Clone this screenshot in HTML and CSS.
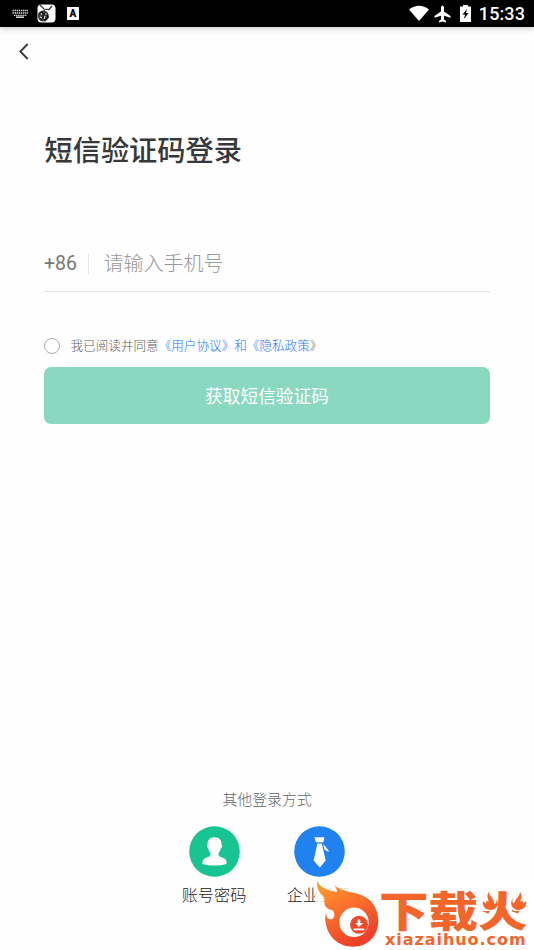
FILE: index.html
```html
<!DOCTYPE html>
<html lang="zh-CN">
<head>
<meta charset="utf-8">
<title>短信验证码登录</title>
<link rel="stylesheet" href="styles.css">
</head>
<body>
<header class="status">
  <svg class="keyboard" width="17" height="10" viewBox="0 0 17 10"><g fill="none" stroke="#ddd"><path d="M.5 1.5H16" stroke-width="1.5" stroke-dasharray="1.4 .7"/><path d="M.5 4H16M2 6.3H15" stroke-width="1.3" stroke-dasharray="1.4 .7"/><path d="M4 8.2H12" stroke-width="1.5"/></g></svg>
  <svg class="app" width="19" height="19" viewBox="0 0 19 19"><rect x=".5" y=".5" width="18" height="18" rx="4" fill="#fff"/><path d="M3 1l4 4 5 .5L15 2M7 6l1 3" stroke="#333" stroke-width="1.2" fill="none"/><circle cx="6.3" cy="12" r="5.500" fill="#444"/><path d="M2 10l3-2 1 3 3-2 2 4-3 3-2-3-3 3" fill="none" stroke="#111" stroke-width="1.5"/><path d="M4 9l1 2M8 12l-1 3M3 13l2 1M9 9v2" stroke="#eee"/></svg>
  <span class="letter">A</span>
  <div class="system">
    <svg width="20" height="17" viewBox="0 0 20 17"><path d="M0 4.5Q10-3 20 4.5L10 16Z" fill="#fff"/></svg>
    <svg class="plane" width="17" height="18" viewBox="0 0 17 18"><path d="M7 2Q8.5-1 10 2V6.5L16.5 11V12.7L10 10.8V14.5L12 16V17.5L8.5 16.5 5 17.5V16L7 14.5V10.8L.5 12.7V11L7 6.5Z" fill="#fff"/></svg>
    <svg class="battery" width="11" height="17" viewBox="0 0 11 17"><path d="M3 0H8V1.5H11V17H0V1.5H3Z" fill="#fff"/><path d="M7 4L2.5 9.5H5L4 14 8.5 8H6Z" fill="#000"/></svg>
    <time>15:33</time>
  </div>
</header>
<nav class="nav"><svg width="10" height="17" viewBox="0 0 10 17"><path d="M8.7 1L1.3 8.5 8.7 16" fill="none" stroke="#36383a" stroke-width="1.8"/></svg></nav>
<main class="login">
  <h1>短信验证码登录</h1>
  <div class="phone"><span class="code">+86</span><span class="hint">请输入手机号</span></div>
  <div class="agree"><i class="radio"></i><span>我已阅读并同意<b>《用户协议》和《隐私政策</b>》</span></div>
  <div class="submit">获取短信验证码</div>
</main>
<footer class="other">
  <p class="other-title">其他登录方式</p>
  <div class="methods">
    <div class="method">
      <svg width="51" height="51" viewBox="0 0 51 51"><circle cx="25.5" cy="25.5" r="25.3" fill="#18c491"/><path d="M25.5 11.3C20.500 11.300 18.200 14.500 18.500 19C17.500 19.500 17.800 22 19.200 22.500C19.700 25 20.700 26 21.500 27.200Q22 30 19 31L16 32.300Q13.300 33.500 13.300 38Q19 39.600 25.500 39.600T37.700 38Q37.700 33.500 35 32.300L32 31Q29 30 29.500 27.200C30.300 26 31.300 25 31.800 22.500C33.200 22 33.500 19.500 32.500 19C32.800 14.500 30.500 11.300 25.500 11.300Z" fill="#fff"/></svg>
      <span>账号密码</span>
    </div>
    <div class="method">
      <svg width="51" height="51" viewBox="0 0 51 51"><circle cx="25.500" cy="25.500" r="25.300" fill="#2082f0"/><path d="M20.500 11.300H30.500L29.300 16.200H22ZM23.400 17.500H27.800L31.700 34.500 25.800 41.500 19.600 34.500Z" fill="#fff"/><path d="M29.200 18L34.600 24.500 34.300 26 30.500 23.600Z" fill="#fff"/></svg>
      <span>企业登录</span>
    </div>
  </div>
</footer>
<div class="watermark">
  <svg class="flame" width="68" height="70" viewBox="0 0 68 70">
    <defs><linearGradient id="fire" x1="0" y1="0" x2=".5" y2="1"><stop offset="0" stop-color="#ffa02d"/><stop offset=".55" stop-color="#f96b2c"/><stop offset="1" stop-color="#ed402a"/></linearGradient></defs>
    <path d="M2.300 1C5 7 10 10 22 12C22 9 20.500 7 19 5C25 10 34 12 42 13.500C56 17 63.500 28 63.300 42C62.500 57 52 66.700 38 66.700C23 66.700 12.500 56 10.700 43Q9.500 37 11 33.300C11.500 38 13.500 39.800 16.500 39.200C20 38 20 34 18.300 31C16 29 11 30 9.500 24C8.800 19 11 19 7.500 15.500C3 11 1.500 7 2.300 1Z" fill="url(#fire)"/>
    <circle cx="39" cy="42.300" r="14.700" fill="#fff"/>
    <circle cx="44" cy="44.800" r="9" fill="#ed492b"/>
    <path d="M42.700 39.500H45.300V43H48L44 47 40 43H42.700ZM38.700 48.500H49.300V50.300H38.700Z" fill="#fff"/>
  </svg>
  <div class="brand">
    <span class="brand-name">下载火</span><span class="brand-url">xiazaihuo.com</span>
    <svg class="sparks" width="48" height="28" viewBox="0 0 48 28"><path d="M0 2H18V14L14 21H0ZM30 2H48V21H34L30 17Z" fill="#fff"/><path d="M9 2C9 7 15 9 14 14C17 13 17 11 16 8C20 14 17 19 11 20C6 20 2 17 3 11C5 13 6 14 8 13C10 10 5 7 9 2ZM40 2C40 7 34 9 35 14C32 13 32 11 33 8C29 14 32 19 38 20C43 20 47 17 46 11C44 13 43 14 41 13C39 10 44 7 40 2Z" fill="#f3662b"/><path d="M6 11L14 12 14 18H7ZM34 12L43 11 42 18H35Z" fill="#f3662b"/></svg>
  </div>
</div>
</body>
</html>
```
FILE: styles.css
```css
* { box-sizing: border-box; }
body { margin: 0; height: 950px; overflow: hidden; position: relative; display: flex; flex-direction: column; background: #fefefe; font-family: Roboto, "Noto Sans CJK SC", sans-serif; color: #36383a; }
svg { display: block; flex: none; }
.status { height: 27px; flex: none; display: flex; align-items: center; padding: 0 9px 0 12px; background: #000; box-shadow: 0 1px 6px rgba(0,0,0,.25); }
.app { margin-left: 8px; }
.letter { width: 12px; height: 13px; margin-left: 11px; background: #fff; color: #000; font: 900 10px/13px Roboto, sans-serif; text-align: center; }
.system { display: flex; align-items: center; margin-left: auto; color: #fff; }
.plane { margin-left: 5px; }
.battery { margin-left: 9px; }
.system time { margin-left: 8px; font-size: 18px; font-weight: 500; line-height: 27px; letter-spacing: .1px; }
.nav { height: 50px; padding: 16px 0 0 19px; flex: none; }
.login { padding: 55px 44px 0; }
h1 { margin: 0 0 0 .5px; font-size: 28.200px; line-height: 40px; font-weight: 500; }
.phone { height: 55px; margin-top: 65px; display: flex; align-items: center; border-bottom: 1px solid #e5e5e5; }
.code { width: 45px; height: 20px; line-height: 20px; border-right: 1px solid #e8e8e8; font-size: 19.500px; color: #777; }
.hint { margin-left: 14.500px; font-size: 20px; line-height: 28px; color: #999; font-weight: 300; }
.agree { height: 20px; margin-top: 44px; display: flex; align-items: center; font-size: 12.600px; line-height: 18px; color: #606060; font-weight: 300; white-space: nowrap; }
.agree b { font-weight: 300; color: #1d75fa; }
.radio { width: 16px; height: 16px; margin-right: 10.500px; border: 1px solid #aaa; border-radius: 50%; }
.submit { height: 57px; margin-top: 11px; padding-top: 2px; border-radius: 7px; background: #8ad8c0; color: #fff; font-size: 17.700px; line-height: 57px; text-align: center; }
.other { margin-top: auto; height: 163px; }
.other-title { margin: 0; padding-top: 1px; text-align: center; font-size: 14.850px; line-height: 24px; color: #666; font-weight: 300; }
.methods { display: flex; justify-content: center; gap: 39px; margin: 14px 1px 0 0; }
.method { width: 66px; display: flex; flex-direction: column; align-items: center; font-size: 16.200px; line-height: 24px; white-space: nowrap; color: #222; font-weight: 300; }
.method span { margin-top: 7px; }
.watermark { position: absolute; left: 315px; top: 880px; width: 219px; height: 70px; display: flex; background: rgba(255,255,255,.82); }
.flame { margin-right: -4px; }
.brand { position: relative; width: 152px; padding-top: 7px; display: flex; flex-direction: column; color: #f3662b; }
.brand-name { height: 43px; font: 900 49.500px/43px "Noto Sans CJK SC", sans-serif; white-space: nowrap; transform: scaleY(.85); transform-origin: 0 50%; }
.brand-url { margin-left: 6px; font: 700 16px/20px "DejaVu Sans", sans-serif; letter-spacing: .950px; white-space: nowrap; }
.sparks { position: absolute; left: 101px; top: 10px; }
```
